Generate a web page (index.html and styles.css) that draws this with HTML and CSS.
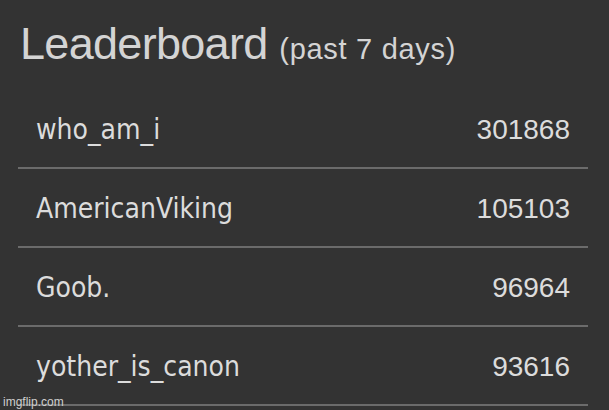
FILE: index.html
```html
<!DOCTYPE html>
<html>
<head>
<meta charset="utf-8">
<link rel="stylesheet" href="styles.css">
</head>
<body>
<div class="board">
  <header class="head">
    <h1 class="title">Leaderboard <span class="sub">(past 7 days)</span></h1>
  </header>
  <ul class="rows">
    <li class="row"><span class="name">who_am_i</span><span class="score">301868</span></li>
    <li class="row"><span class="name">AmericanViking</span><span class="score">105103</span></li>
    <li class="row"><span class="name">Goob.</span><span class="score">96964</span></li>
    <li class="row"><span class="name">yother_is_canon</span><span class="score">93616</span></li>
  </ul>
</div>
<div class="watermark">imgflip.com</div>
</body>
</html>
```

FILE: styles.css
```css
html, body {
  margin: 0;
  padding: 0;
  background: #333333;
  width: 609px;
  height: 410px;
  overflow: hidden;
}
.board {
  width: 570px;
  margin-left: 18px;
}
.head {
  height: 90px;
  padding-top: 21px;
  box-sizing: border-box;
}
.title {
  margin: 0;
  padding-left: 2px;
  font-family: "Liberation Sans", Arial, sans-serif;
  font-weight: normal;
  font-size: 45px;
  line-height: 45px;
  letter-spacing: -0.7px;
  color: #d4d4d4;
  white-space: nowrap;
}
.sub {
  font-size: 29px;
  letter-spacing: 0.7px;
}
.rows {
  list-style: none;
  margin: 0;
  padding: 0;
}
.row {
  display: flex;
  justify-content: space-between;
  align-items: baseline;
  padding: 25px 18px 22px 18px;
  border-bottom: 2px solid #6b6b6b;
  line-height: 30px;
}
.name {
  font-family: "DejaVu Sans Condensed", "DejaVu Sans", Verdana, sans-serif;
  font-stretch: semi-condensed;
  font-size: 28px;
  color: #dcdcdc;
}
.score {
  font-family: "Liberation Sans", Arial, sans-serif;
  font-size: 28px;
  color: #dcdcdc;
}
.watermark {
  position: absolute;
  left: 3px;
  top: 395px;
  font-family: "Liberation Sans", Arial, sans-serif;
  font-size: 12px;
  line-height: 14px;
  color: #cfcfcf;
}
```
